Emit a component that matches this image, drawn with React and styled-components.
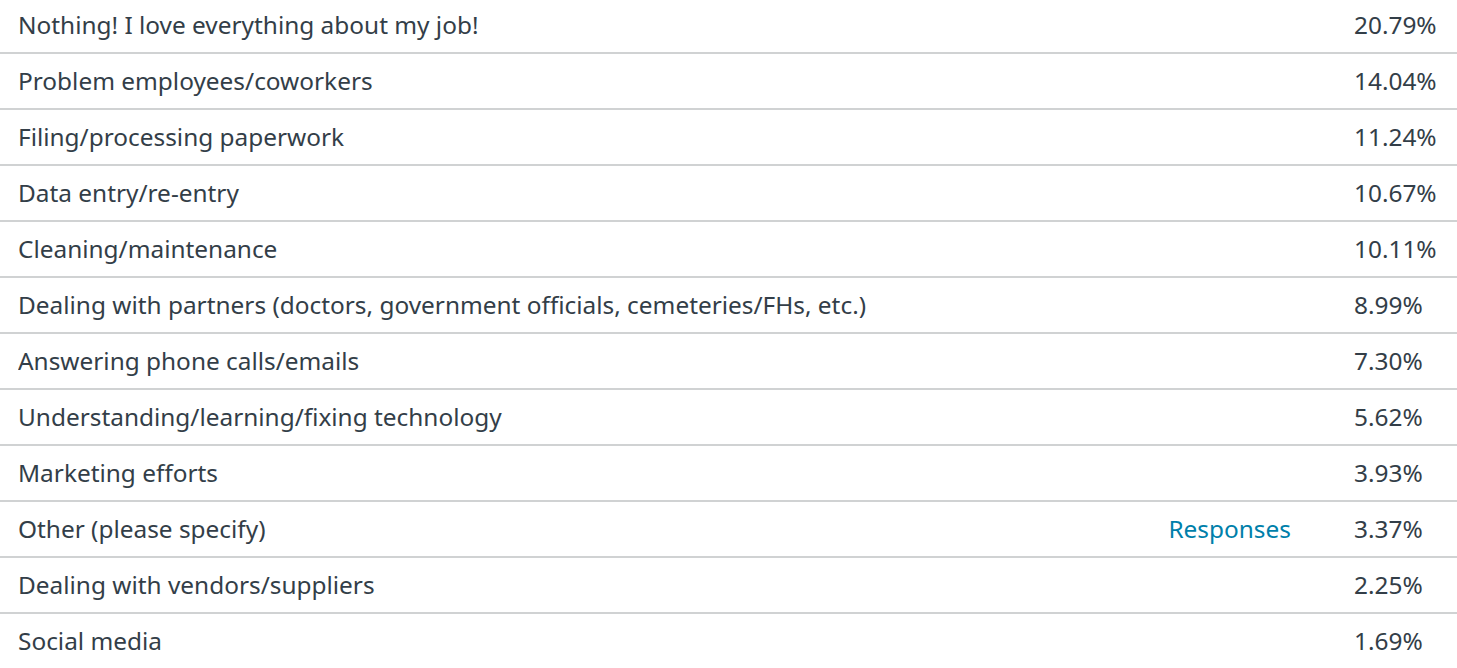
import React from "react";
import styled, { createGlobalStyle } from "styled-components";

const GlobalStyle = createGlobalStyle`
  html, body {
    margin: 0;
    padding: 0;
    background: #ffffff;
  }
  body {
    font-family: "Noto Sans", "Open Sans", sans-serif;
    color: #333e48;
    overflow: hidden;
  }
`;

const Table = styled.div`
  display: flex;
  flex-direction: column;
  margin-top: -2px;
  width: 100%;
`;

const Row = styled.div`
  display: grid;
  grid-template-columns: 1fr auto 103px;
  column-gap: 63px;
  align-items: center;
  height: 54px;
  border-bottom: 2px solid #d0d2d3;
  padding-left: 18px;
  font-size: 24.4px;
  line-height: 54px;
  white-space: nowrap;
`;

const Label = styled.span`
  color: #333e48;
  overflow: hidden;
`;

const ResponsesLink = styled.a`
  color: #007faa;
  text-decoration: none;
  cursor: pointer;
  text-align: right;
`;

const Percent = styled.span`
  color: #333e48;
  text-align: left;
`;

const rows = [
  ["Nothing! I love everything about my job!", "20.79%"],
  ["Problem employees/coworkers", "14.04%"],
  ["Filing/processing paperwork", "11.24%"],
  ["Data entry/re-entry", "10.67%"],
  ["Cleaning/maintenance", "10.11%"],
  ["Dealing with partners (doctors, government officials, cemeteries/FHs, etc.)", "8.99%"],
  ["Answering phone calls/emails", "7.30%"],
  ["Understanding/learning/fixing technology", "5.62%"],
  ["Marketing efforts", "3.93%"],
  ["Other (please specify)", "3.37%", true],
  ["Dealing with vendors/suppliers", "2.25%"],
  ["Social media", "1.69%"],
];

export default function App() {
  return (
    <>
      <GlobalStyle />
      <Table>
        {rows.map(([label, pct, link]) => (
          <Row key={label}>
            <Label>{label}</Label>
            {link ? <ResponsesLink>Responses</ResponsesLink> : <span />}
            <Percent>{pct}</Percent>
          </Row>
        ))}
      </Table>
    </>
  );
}
